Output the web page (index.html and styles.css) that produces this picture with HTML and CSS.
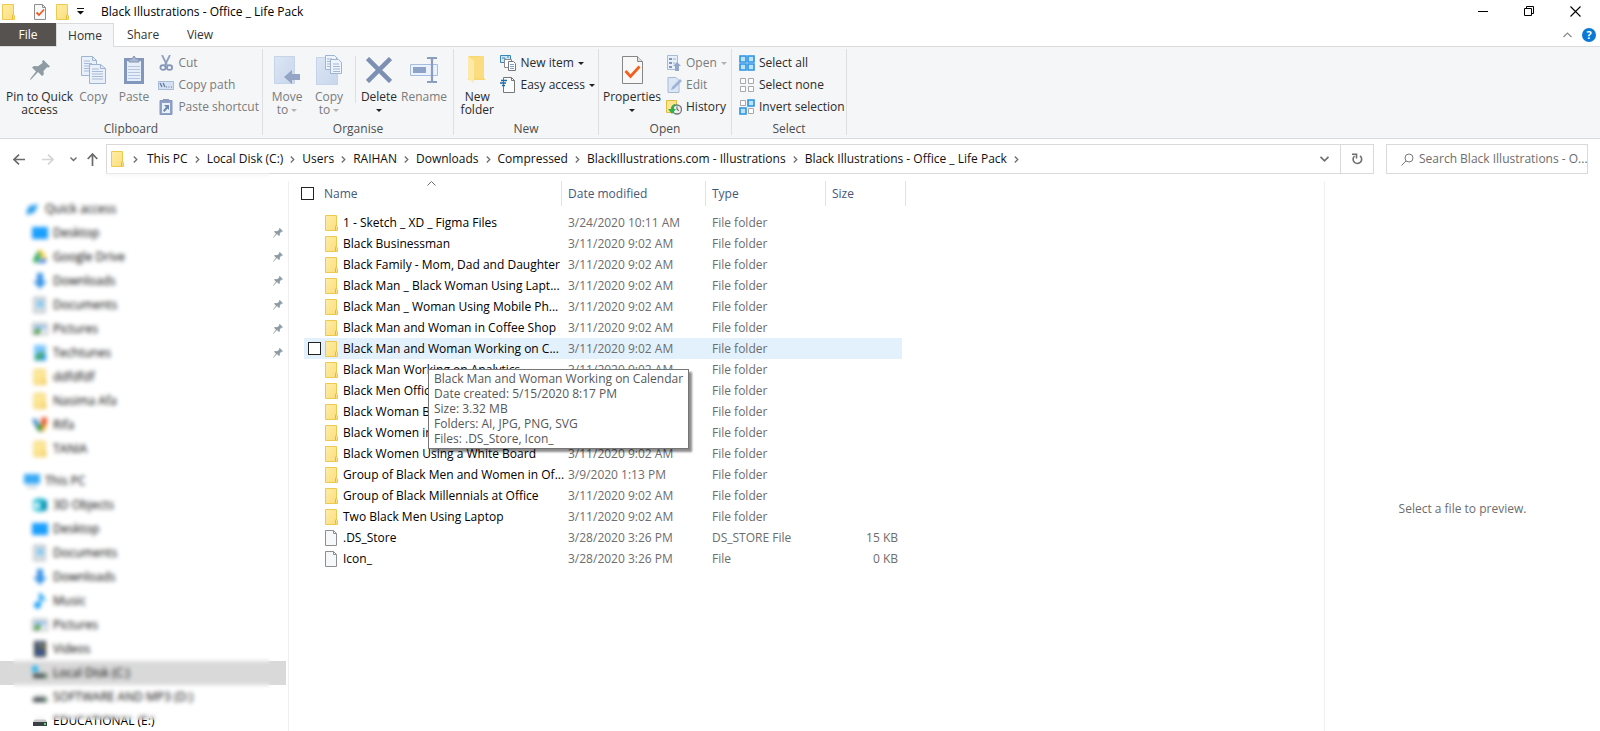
FILE: index.html
```html
<!DOCTYPE html>
<html lang="en">
<head>
<meta charset="utf-8">
<title>Black Illustrations - Office _ Life Pack</title>
<link rel="stylesheet" href="styles.css">
</head>
<body>
<svg class="defs" aria-hidden="true">
  <linearGradient id="fold" x1="0" y1="0" x2="1" y2="1"><stop offset="0" stop-color="#ffeda6"/><stop offset="1" stop-color="#fbdd7c"/></linearGradient>
  <linearGradient id="pale" x1="0" y1="0" x2="1" y2="1"><stop offset="0" stop-color="#dbe5f4"/><stop offset="1" stop-color="#c9d7ec"/></linearGradient>
  <symbol id="folder" viewBox="0 0 13 16"><path d="M.5.5h11v10.500l1 .7v3.800H.5z" fill="url(#fold)" stroke="#ecc94f"/><path d="M10.500 15v-3.500l1-1.500" fill="none" stroke="#e3b93c"/></symbol>
  <symbol id="file" viewBox="0 0 12 16"><path d="M.5.5h8l3 3v12H.5z" fill="#f7f8f9" stroke="#8e8e8e"/><path d="M8.500.5v3h3" fill="none" stroke="#8e8e8e"/></symbol>
  <symbol id="pin" viewBox="0 0 20 20"><path d="M13.500 0 20 6.500l-1.500 1-1.500-.3-3.500 3.800.3 3.500-1.800 1.500-4-4L1 19.500l-1 .5.500-1.500L6 11.500l-4-4L4 6l4 .3L12.500 3l-.3-2z" fill="#8e9ba3"/></symbol>
  <symbol id="crumb" viewBox="0 0 5 7"><path d="M.8.5l3 3-3 3" fill="none" stroke="#6f6f6f" stroke-width="1.300"/></symbol>
  <symbol id="desktop" viewBox="0 0 16 16"><path d="M0 2h16v12H0z" fill="#1593f5"/><path d="M1 3h14v9H1z" fill="#18a0ff"/></symbol>
  <symbol id="down" viewBox="0 0 16 16"><path d="M5 0h6v8h4l-7 8-7-8h4z" fill="#3a93e4"/></symbol>
  <symbol id="doc" viewBox="0 0 16 16"><path d="M2 .5h11v15H2z" fill="#e4e8ea" stroke="#8d979d"/><path d="M5 3h6v8H5z" fill="#82c8f2"/></symbol>
  <symbol id="pic" viewBox="0 0 16 16"><path d="M.5 2.500h15v11H.5z" fill="#e8eef2" stroke="#a7a7a7"/><path d="M2 4h12v4H2z" fill="#9bc3ee"/><path d="M2 12c1-5 4-5 7-4l-2 5H2z" fill="#4f9e46"/></symbol>
  <symbol id="drive" viewBox="0 0 16 16"><path d="M3 6h10l2 3H1z" fill="#c6c8c9"/><path d="M1 9h14v4H1z" fill="#3b4144"/><path d="M12 10h2v2h-2z" fill="#54e06a"/></symbol>
</svg>

<header class="titlebar">
  <div class="quick">
    <svg width="13" height="16"><use href="#folder"/></svg>
    <i class="bar"></i>
    <svg width="12" height="16" viewBox="0 0 12 16"><use href="#file"/><path d="M2.500 8.500 5 11l5-5.500" fill="none" stroke="#ee5a24" stroke-width="1.800"/></svg>
    <svg width="13" height="16"><use href="#folder"/></svg>
    <svg class="qmenu" width="7" height="7" viewBox="0 0 7 7"><path d="M0 0h7v1H0zM0 3h7L3.500 6.500z" fill="#111"/></svg>
    <i class="bar"></i>
  </div>
  <h1>Black Illustrations - Office _ Life Pack</h1>
  <div class="window">
    <button aria-label="Minimise"><svg width="11" height="11"><path d="M0 5.500h10" stroke="#000"/></svg></button>
    <button aria-label="Restore"><svg width="11" height="11"><path d="M.5 2.500h7v7h-7zM2.500 2V.5h7v7H8" fill="none" stroke="#000"/></svg></button>
    <button aria-label="Close"><svg width="11" height="11"><path d="M.5.5l10 10M10.500.5l-10 10" stroke="#000" stroke-width="1.100"/></svg></button>
  </div>
</header>

<nav class="tabs">
  <button class="file">File</button><button class="home">Home</button><button class="share">Share</button><button class="view">View</button>
  <div class="tabs-end">
    <button aria-label="Collapse ribbon"><svg width="9" height="6"><path d="M.5 5l4-4 4 4" fill="none" stroke="#8a8a8a" stroke-width="1.200"/></svg></button>
    <button class="help" aria-label="Help">?</button>
  </div>
</nav>

<section class="ribbon">
  <div class="group clipboard">
    <div class="tools">
      <button class="big wide"><svg width="20" height="20"><use href="#pin"/></svg><span>Pin to Quick<br>access</span></button>
      <button class="big off"><svg width="25" height="28" viewBox="0 0 25 28"><g fill="#e9f0fa" stroke="#9fb3d2"><path d="M.5.5h11l4 4v15H.5z"/><path d="M11.500.5v4h4" fill="none"/><path d="M8.500 8.500h11l5 4v15h-16z"/><path d="M19.500 8.500v4h5" fill="none"/></g><path d="M3 5h6M3 7.500h8M3 10h5M3 12.500h5M3 15h5M11 13h7M11 15.500h11M11 18h11M11 20.500h11M11 23h11" stroke="#a9bbd8"/></svg><span>Copy</span></button>
      <button class="big off"><svg width="20" height="28" viewBox="0 0 20 28"><path d="M1 3h18v24H1z" fill="#8296be" stroke="#8397bd" stroke-width="2"/><path d="M3 5h14v20H3z" fill="#e6eefa"/><path d="M5 6V3h3l2-3 2 3h3v3z" fill="#a9b8d0" stroke="#8595b3"/><path d="M4 10.500h12M4 13.500h12M4 16.500h12M4 19.500h12M4 22.500h12" stroke="#b6c6df"/></svg><span>Paste</span></button>
      <div class="list">
        <button class="off"><svg width="16" height="16"><path d="M4 0l5 10M12 0L7 10" stroke="#8fa1bf" stroke-width="1.800"/><g fill="none" stroke="#8496b8" stroke-width="1.800"><ellipse cx="5" cy="12.500" rx="2.600" ry="2.400"/><ellipse cx="11.500" cy="12.500" rx="2.600" ry="2.400"/></g></svg>Cut</button>
        <button class="off"><svg width="16" height="16"><path d="M.5 4.500h15v8H.5z" fill="#d4e1f3" stroke="#a9bbd6"/><path d="M2 6l2 4M5 6l2 4M8 10h1M10.500 10h1M13 10h1" stroke="#5d7298" stroke-width="1.200"/></svg>Copy path</button>
        <button class="off"><svg width="16" height="16"><path d="M2 1.500h12v14H2z" fill="#8ea2c7" stroke="#8598bd"/><path d="M4 4h8v10H4z" fill="#eaf1fb"/><path d="M5 0h6v3H5z" fill="#8c9cba"/><path d="M6 6h5v5L9.500 9.500 6.500 13 5 11.500 8 8z" fill="#6f86b0"/></svg>Paste shortcut</button>
      </div>
    </div>
    <div class="caption">Clipboard</div>
  </div>

  <div class="group organise">
    <div class="tools">
      <button class="big off"><svg width="26" height="28" viewBox="0 0 26 28"><path d="M.5.5h20v27H.5z" fill="url(#pale)" stroke="#c6d4ea"/><path d="M10 21l8-7v4h8v6h-8v4z" fill="#93a4c4"/></svg><span>Move<br>to <b class="arrow"></b></span></button>
      <button class="big off"><svg width="26" height="30" viewBox="0 0 26 30"><path d="M.5 2.500h21v27H.5z" fill="url(#pale)" stroke="#c6d4ea"/><g fill="#eef4fc" stroke="#9fb3d2"><path d="M9.500.5h9l2 2v12h-11z"/><path d="M14.500 4.500h8l3 3v11h-11z"/></g><path d="M11 4h5M11 6.500h3M11 9h3M11 11.500h3M17 9h6M17 11.500h7M17 14h7M17 16.500h7" stroke="#a2b6d6"/></svg><span>Copy<br>to <b class="arrow"></b></span></button>
      <i class="rule"></i>
      <button class="big"><svg width="26" height="26"><path d="M1.500 1.500l23 23M24.500 1.500l-23 23" stroke="#7d90b3" stroke-width="4.500"/></svg><span>Delete<br><b class="arrow"></b></span></button>
      <button class="big off"><svg width="28" height="26"><path d="M.5 7.500h27v11H.5z" fill="#e9f2fd" stroke="#a5bde0"/><path d="M3 10h13v6H3z" fill="#8ea2c6"/><path d="M17 1h4l1 1 1-1h4M17 25h4l1-1 1 1h4M22 2v22" fill="none" stroke="#8b9dbe" stroke-width="2.200"/></svg><span>Rename</span></button>
    </div>
    <div class="caption">Organise</div>
  </div>

  <div class="group new">
    <div class="tools">
      <button class="big"><svg width="20" height="27" viewBox="0 0 20 27"><path d="M1 0h16v22l2 2H1z" fill="#f8d775"/><path d="M5 2l12-2v22H6z" fill="#fbdc7f"/><path d="M1 0l6 5v22l-6-4z" fill="#ffe9a8"/></svg><span>New<br>folder</span></button>
      <div class="list">
        <button><svg width="16" height="16"><path d="M.5.5h10v7H.5z" fill="#cfe7f8" stroke="#3a87b7"/><path d="M2 3h3v3M7 2h2" stroke="#3a87b7" fill="none"/><path d="M4.500 4.500h7v8h-7z" fill="#fff" stroke="#8c8c8c"/><path d="M8.500 6.500h5l2 2v7h-7z" fill="#fff" stroke="#777"/><path d="M10 9.500h4M10 11.500h4M10 13.500h4" stroke="#7d9fd0"/></svg>New item<b class="arrow"></b></button>
        <button><svg width="16" height="16"><path d="M3.500.5h8l3 3v12h-11z" fill="#fbfcfc" stroke="#777"/><path d="M11.500.5v3h3" fill="none" stroke="#777"/><path d="M1 3.500h6M0 6h6M2 8.500h3" stroke="#1e6aa8" stroke-width="1.300"/></svg>Easy access<b class="arrow"></b></button>
      </div>
    </div>
    <div class="caption">New</div>
  </div>

  <div class="group open">
    <div class="tools">
      <button class="big wide"><svg width="21" height="28" viewBox="0 0 21 28"><path d="M.5.5h15l5 5v22H.5z" fill="#f8f8f8" stroke="#868686"/><path d="M15.500.5v5h5" fill="#ddd" stroke="#868686"/><path d="M3.500 15l5 5.500 9-10" fill="none" stroke="#f4601c" stroke-width="2.800"/></svg><span>Properties<br><b class="arrow"></b></span></button>
      <div class="list">
        <button class="off"><svg width="16" height="16"><path d="M1.500.5h10v14h-10z" fill="#e7effa" stroke="#a9bad6"/><path d="M3 3h3v2H3zM3 7h3v2H3zM3 11h3v2H3z" fill="#7f95bd"/><path d="M7 4h3M7 8h2" stroke="#9fb0cf"/><path d="M11 7l4 4h-2v5H9v-5H7z" fill="#94a6c8"/></svg>Open<b class="arrow"></b></button>
        <button class="off"><svg width="16" height="16"><path d="M2 .5h8l3 3v12H2z" fill="#dce7f6" stroke="#a9bad6"/><path d="M5 13l1-3 8-8 2 2-8 8z" fill="#9fb4d6"/></svg>Edit</button>
        <button><svg width="16" height="16"><path d="M.5 1.500h10v12H.5z" fill="#fde68f" stroke="#e2bb3f"/><circle cx="11" cy="10.500" r="4.500" fill="#eee" stroke="#777" stroke-width="1.300"/><path d="M11 7.500v3l2 1" fill="none" stroke="#555"/><path d="M2 10h3c0-3 2-5 5-5-2 1-2 3-2 5h2l-4 5z" fill="#2fae4b"/></svg>History</button>
      </div>
    </div>
    <div class="caption">Open</div>
  </div>

  <div class="group select">
    <div class="tools">
      <div class="list">
        <button><svg width="16" height="16"><path d="M1 1h6v6H1zM9 1h6v6H9zM1 9h6v6H1zM9 9h6v6H9z" fill="#bfe2fb" stroke="#2b93e3" stroke-width="1.600"/></svg>Select all</button>
        <button><svg width="16" height="16"><path d="M1.500 1.500h5v5h-5zM9.500 1.500h5v5h-5zM1.500 9.500h5v5h-5zM9.500 9.500h5v5h-5z" fill="#fff" stroke="#a8a8a8"/></svg>Select none</button>
        <button><svg width="16" height="16"><path d="M1.500 1.500h5v5h-5zM9.500 9.500h5v5h-5z" fill="#fff" stroke="#a8a8a8"/><path d="M9 1h6v6H9zM1 9h6v6H1z" fill="#bfe2fb" stroke="#2b93e3" stroke-width="1.600"/></svg>Invert selection</button>
      </div>
    </div>
    <div class="caption">Select</div>
  </div>
</section>

<div class="nav">
  <div class="arrows">
    <button aria-label="Back"><svg width="12" height="11"><path d="M12 5.500H1M6 .7L1 5.500l5 4.800" fill="none" stroke="#6a6a6a" stroke-width="1.600"/></svg></button>
    <button aria-label="Forward"><svg width="12" height="11"><path d="M0 5.500h11M6 .7l5 4.800-5 4.800" fill="none" stroke="#d4d4d4" stroke-width="1.600"/></svg></button>
    <button class="recent" aria-label="Recent"><svg width="7" height="5"><path d="M.5.5l3 3 3-3" fill="none" stroke="#6a6a6a" stroke-width="1.400"/></svg></button>
    <button aria-label="Up"><svg width="11" height="13"><path d="M5.500 13V1M.7 6l4.800-5 4.800 5" fill="none" stroke="#6a6a6a" stroke-width="1.700"/></svg></button>
  </div>
  <div class="address">
    <svg class="loc" width="13" height="16"><use href="#folder"/></svg>
    <svg class="sep" width="5" height="7"><use href="#crumb"/></svg>
    <a href="#">This PC</a><svg class="sep" width="5" height="7"><use href="#crumb"/></svg>
    <a href="#">Local Disk (C:)</a><svg class="sep" width="5" height="7"><use href="#crumb"/></svg>
    <a href="#">Users</a><svg class="sep" width="5" height="7"><use href="#crumb"/></svg>
    <a href="#">RAIHAN</a><svg class="sep" width="5" height="7"><use href="#crumb"/></svg>
    <a href="#">Downloads</a><svg class="sep" width="5" height="7"><use href="#crumb"/></svg>
    <a href="#">Compressed</a><svg class="sep" width="5" height="7"><use href="#crumb"/></svg>
    <a href="#">BlackIllustrations.com - Illustrations</a><svg class="sep" width="5" height="7"><use href="#crumb"/></svg>
    <a href="#">Black Illustrations - Office _ Life Pack</a><svg class="sep" width="5" height="7"><use href="#crumb"/></svg>
    <button class="drop" aria-label="Previous locations"><svg width="9" height="6"><path d="M.5.8l4 4 4-4" fill="none" stroke="#6f6f6f" stroke-width="1.700"/></svg></button>
    <button class="refresh" aria-label="Refresh"><svg width="11" height="12"><path d="M2.500 3A4.300 4.300 0 1 0 8 2.800M0 1.200h4.500V5.500" fill="none" stroke="#6f6f6f" stroke-width="1.600"/></svg></button>
  </div>
  <label class="search"><svg width="13" height="13"><circle cx="8" cy="5" r="4" fill="none" stroke="#7a7a7a"/><path d="M5 8L.5 12.500" stroke="#7a7a7a"/></svg><input type="text" placeholder="Search Black Illustrations - O..." aria-label="Search"></label>
</div>

<main class="body">
  <aside class="tree">
    <ul>
      <li class="root"><svg width="16" height="16"><path d="M2 12L5 5l9-2-3 8-7 3z" fill="#2f9fea"/></svg>Quick access</li>
      <li><svg width="16" height="16"><use href="#desktop"/></svg>Desktop<svg class="pin" width="10" height="10"><use href="#pin"/></svg></li>
      <li><svg width="16" height="16"><path d="M1 11L6 2l3 4-4 8H3z" fill="#27a552"/><path d="M6 1h4l5 9h-4z" fill="#fbc934"/><path d="M6 14l2-4h7l-2 4z" fill="#3d7fe8"/></svg>Google Drive<svg class="pin" width="10" height="10"><use href="#pin"/></svg></li>
      <li><svg width="16" height="16"><use href="#down"/></svg>Downloads<svg class="pin" width="10" height="10"><use href="#pin"/></svg></li>
      <li><svg width="16" height="16"><use href="#doc"/></svg>Documents<svg class="pin" width="10" height="10"><use href="#pin"/></svg></li>
      <li><svg width="16" height="16"><use href="#pic"/></svg>Pictures<svg class="pin" width="10" height="10"><use href="#pin"/></svg></li>
      <li><svg width="16" height="16"><path d="M2 0h12v16H2z" fill="#7cc6fa"/><path d="M3 15c0-6 4-8 10-8l-5 8z" fill="#3fa563"/><path d="M8 15l6-7v7z" fill="#2292e8"/></svg>Techtunes<svg class="pin" width="10" height="10"><use href="#pin"/></svg></li>
      <li><svg width="16" height="16"><use href="#folder"/></svg>ddfdfdf</li>
      <li><svg width="16" height="16"><use href="#folder"/></svg>Nasima Afa</li>
      <li><svg width="16" height="16"><path d="M0 2h5l4 12-5-3z" fill="#3c86c9"/><path d="M9 1l6-1v7l-6 5z" fill="#ea5b30"/><path d="M4 9l4-2 5 3-3 5-4-1z" fill="#3f9a4b"/><path d="M10 9l5-2-2 6-4 2z" fill="#f2a92c"/></svg>Rifa</li>
      <li><svg width="16" height="16"><use href="#folder"/></svg>TANIA</li>
    </ul>
    <ul>
      <li class="root pc"><svg width="16" height="16"><path d="M0 1h16v10H0z" fill="#3aaaf4"/><path d="M3 13h10v2H3z" fill="#b7c7d2"/></svg>This PC</li>
      <li><svg width="16" height="16"><path d="M1 3l7-2 7 2v10l-7 2-7-2z" fill="#1fb6cf"/><path d="M2 5l6 1v5l-6 1z" fill="#d4f6fa"/><path d="M11 4l4 1v8l-4 1z" fill="#0783a6"/></svg>3D Objects</li>
      <li><svg width="16" height="16"><use href="#desktop"/></svg>Desktop</li>
      <li><svg width="16" height="16"><use href="#doc"/></svg>Documents</li>
      <li><svg width="16" height="16"><use href="#down"/></svg>Downloads</li>
      <li><svg width="16" height="16"><path d="M7 0h2c1 3 5 4 4 9h-1c0-2-1-3-3-3v6a3.500 3.500 0 1 1-2-3z" fill="#18a0f5"/></svg>Music</li>
      <li><svg width="16" height="16"><use href="#pic"/></svg>Pictures</li>
      <li><svg width="16" height="16"><path d="M2 0h12v16H2z" fill="#3f4247"/><path d="M5 1h6v6H5z" fill="#55719e"/><path d="M5 9h6v5H5z" fill="#3662b5"/><path d="M9 3h3v5H9z" fill="#8d813e"/></svg>Videos</li>
      <li class="on"><svg width="16" height="16"><use href="#drive"/><path d="M0 1h6v6H0z" fill="#28b6ee"/></svg>Local Disk (C:)</li>
      <li><svg width="16" height="16"><use href="#drive"/></svg>SOFTWARE AND MP3 (D:)</li>
      <li><svg width="16" height="16"><use href="#drive"/></svg>EDUCATIONAL (E:)</li>
    </ul>
    <div class="frost"></div>
  </aside>

  <section class="files">
    <table>
      <colgroup><col class="c-check"><col class="c-name"><col class="c-date"><col class="c-type"><col class="c-size"></colgroup>
      <thead><tr>
        <th colspan="2"><div class="head first"><input type="checkbox" aria-label="Select all items">Name<svg class="sort" width="9" height="5"><path d="M.5 4.500l4-4 4 4" fill="none" stroke="#6b6b6b"/></svg></div></th>
        <th><div class="head">Date modified</div></th><th><div class="head">Type</div></th><th><div class="head">Size</div></th>
      </tr></thead>
      <tbody>
        <tr><td></td><td><svg width="13" height="16"><use href="#folder"/></svg>1 - Sketch _ XD _ Figma Files</td><td>3/24/2020 10:11 AM</td><td>File folder</td><td></td></tr>
        <tr><td></td><td><svg width="13" height="16"><use href="#folder"/></svg>Black Businessman</td><td>3/11/2020 9:02 AM</td><td>File folder</td><td></td></tr>
        <tr><td></td><td><svg width="13" height="16"><use href="#folder"/></svg>Black Family - Mom, Dad and Daughter</td><td>3/11/2020 9:02 AM</td><td>File folder</td><td></td></tr>
        <tr><td></td><td><svg width="13" height="16"><use href="#folder"/></svg>Black Man _ Black Woman Using Lapt...</td><td>3/11/2020 9:02 AM</td><td>File folder</td><td></td></tr>
        <tr><td></td><td><svg width="13" height="16"><use href="#folder"/></svg>Black Man _ Woman Using Mobile Ph...</td><td>3/11/2020 9:02 AM</td><td>File folder</td><td></td></tr>
        <tr><td></td><td><svg width="13" height="16"><use href="#folder"/></svg>Black Man and Woman in Coffee Shop</td><td>3/11/2020 9:02 AM</td><td>File folder</td><td></td></tr>
        <tr class="hover"><td><input type="checkbox" aria-label="Select Black Man and Woman Working on Calendar"></td><td><svg width="13" height="16"><use href="#folder"/></svg>Black Man and Woman Working on C...</td><td>3/11/2020 9:02 AM</td><td>File folder</td><td></td></tr>
        <tr><td></td><td><svg width="13" height="16"><use href="#folder"/></svg>Black Man Working on Analytics</td><td>3/11/2020 9:02 AM</td><td>File folder</td><td></td></tr>
        <tr><td></td><td><svg width="13" height="16"><use href="#folder"/></svg>Black Men Office</td><td>3/11/2020 9:02 AM</td><td>File folder</td><td></td></tr>
        <tr><td></td><td><svg width="13" height="16"><use href="#folder"/></svg>Black Woman Business</td><td>3/11/2020 9:02 AM</td><td>File folder</td><td></td></tr>
        <tr><td></td><td><svg width="13" height="16"><use href="#folder"/></svg>Black Women in Office</td><td>3/11/2020 9:02 AM</td><td>File folder</td><td></td></tr>
        <tr><td></td><td><svg width="13" height="16"><use href="#folder"/></svg>Black Women Using a White Board</td><td>3/11/2020 9:02 AM</td><td>File folder</td><td></td></tr>
        <tr><td></td><td><svg width="13" height="16"><use href="#folder"/></svg>Group of Black Men and Women in Of...</td><td>3/9/2020 1:13 PM</td><td>File folder</td><td></td></tr>
        <tr><td></td><td><svg width="13" height="16"><use href="#folder"/></svg>Group of Black Millennials at Office</td><td>3/11/2020 9:02 AM</td><td>File folder</td><td></td></tr>
        <tr><td></td><td><svg width="13" height="16"><use href="#folder"/></svg>Two Black Men Using Laptop</td><td>3/11/2020 9:02 AM</td><td>File folder</td><td></td></tr>
        <tr><td></td><td><svg width="13" height="16" viewBox="0 0 13 16"><use href="#file" width="12" height="16"/></svg>.DS_Store</td><td>3/28/2020 3:26 PM</td><td>DS_STORE File</td><td>15 KB</td></tr>
        <tr><td></td><td><svg width="13" height="16" viewBox="0 0 13 16"><use href="#file" width="12" height="16"/></svg>Icon_</td><td>3/28/2020 3:26 PM</td><td>File</td><td>0 KB</td></tr>
      </tbody>
    </table>
    <div class="tooltip" role="tooltip">Black Man and Woman Working on Calendar<br>Date created: 5/15/2020 8:17 PM<br>Size: 3.32 MB<br>Folders: AI, JPG, PNG, SVG<br>Files: .DS_Store, Icon_</div>
  </section>

  <aside class="preview">Select a file to preview.</aside>
</main>
</body>
</html>
```
FILE: styles.css
```css
* { box-sizing: border-box; }
html, body { height: 100%; }
body {
  margin: 0;
  display: flex;
  flex-direction: column;
  overflow: hidden;
  background: #fff;
  color: #000;
  font: 12px/16px "Open Sans", "Noto Sans", sans-serif;
}
svg { display: block; flex: none; }
.defs { position: absolute; width: 0; height: 0; }
button { margin: 0; padding: 0; border: 0; background: none; font: inherit; color: inherit; }
a { color: inherit; text-decoration: none; }
input { margin: 0; }

.titlebar { display: flex; align-items: center; height: 23px; flex: none; }
.titlebar h1 { margin: 0; font-size: 12px; font-weight: 400; }
.quick { display: flex; align-items: center; padding-left: 2px; width: 101px; }
.bar { width: 1px; height: 12px; background: #8c8c8c; margin: 0 11px 0 8px; }
.quick svg + svg { margin-left: 10px; }
.quick .qmenu { margin-left: 8px; }
.window { display: flex; margin-left: auto; padding-right: 2px; }
.window button { width: 46px; height: 21px; display: grid; place-items: center; }

.tabs { display: flex; height: 24px; flex: none; border-bottom: 1px solid #d9dbdd; color: #333; }
.tabs button { height: 23px; }
.tabs .file { width: 56px; background: #565250; color: #fff; }
.tabs .home { width: 58px; height: 24px; background: #f4f6f8; border: solid #dadbdc; border-width: 1px 1px 0; }
.tabs .share { width: 58px; }
.tabs .view { width: 56px; }
.tabs-end { display: flex; align-items: center; gap: 10px; margin-left: auto; padding-right: 4px; }
.tabs-end button { display: grid; place-items: center; height: 14px; }
.tabs-end .help { width: 14px; border-radius: 50%; background: #0a78d4; color: #fff; font-size: 11px; line-height: 14px; font-weight: 700; }

.ribbon { display: flex; flex: none; height: 92px; background: #f4f6f8; border-bottom: 1px solid #d9dbdd; color: #2b2b2b; }
.group { display: flex; flex-direction: column; margin: 2px 0 3px; border-right: 1px solid #dddfe1; }
.tools { display: flex; flex: 1; padding: 0 3px; }
.caption { height: 14px; line-height: 16px; text-align: center; color: #4d4d4d; }
.clipboard { width: 263px; }
.organise { width: 191px; }
.new { width: 145px; }
.open { width: 133px; }
.select { width: 115px; }
.big { width: 42px; display: flex; flex-direction: column; align-items: center; line-height: 13px; white-space: nowrap; }
.big svg { margin: auto 0; }
.big span { height: 31px; }
.big.wide { width: 60px; }
.clipboard .big.wide { width: 70px; padding-left: 3px; }
.organise .big:last-child { width: 48px; }
.new .tools { padding-left: 6px; }
.off { color: #7b7b7b; }
.arrow { display: inline-block; vertical-align: middle; border: 3px solid transparent; border-top-color: #222; border-bottom: 0; }
.off .arrow { border-top-color: #b3b3b3; }
.rule { width: 1px; margin: 7px 2px 18px 5px; background: #dddfe1; }
.list { display: flex; flex-direction: column; padding: 3px 0 0 4px; }
.list button { display: flex; align-items: center; gap: 4px; height: 22px; white-space: nowrap; }
.new .list { padding-left: 6px; }

.nav { display: flex; flex: none; padding: 5px 12px 7px 0; height: 42px; }
.arrows { display: flex; align-items: center; gap: 17px; width: 106px; padding-left: 13px; }
.arrows .recent { margin: 0 -7px 0 -1px; }
.address { display: flex; align-items: center; flex: 1; border: 1px solid #d9d9d9; padding-left: 4px; white-space: nowrap; color: #111; }
.sep { margin: 0 7px; }
.loc + .sep { margin: 0 9px; }
.address .drop { margin-left: auto; width: 32px; height: 28px; display: grid; place-items: center; }
.address .refresh { width: 33px; height: 28px; display: grid; place-items: center; border-left: 1px solid #d9d9d9; }
.search { display: flex; align-items: center; gap: 5px; width: 202px; margin-left: 12px; border: 1px solid #d9d9d9; padding-left: 14px; }
.search input { flex: 1; min-width: 0; border: 0; outline: 0; padding: 0; background: none; font: inherit; }
.search input::placeholder { color: #6d6d6d; opacity: 1; }

.body { display: flex; flex: 1; min-height: 0; }
.tree { position: relative; width: 289px; border-right: 1px solid #f0f0f0; padding-top: 16px; }
.tree ul { list-style: none; margin: 0 2px 8px 0; padding: 0; }
.tree li { display: flex; align-items: center; gap: 5px; height: 24px; padding: 0 3px 0 32px; white-space: nowrap; }
.tree .root { padding-left: 24px; }
.tree .on { background: #d9d9d9; }
.tree .pin { margin-left: auto; }
.frost { position: absolute; left: 13px; right: 18px; top: -8px; bottom: 11px; backdrop-filter: blur(2px); }

.files { position: relative; flex: 1; min-width: 0; padding-left: 11px; }
table { width: 606px; table-layout: fixed; border-spacing: 0; }
.c-check { width: 25px; }
.c-name { width: 237px; }
.c-date { width: 144px; }
.c-type { width: 120px; }
.c-size { width: 80px; }
th { height: 31px; padding: 0; vertical-align: top; text-align: left; font-weight: 400; color: #44587c; }
.head { position: relative; display: flex; align-items: center; height: 25px; padding-left: 6px; border-right: 1px solid #e2e2e2; }
.head.first { padding-left: 1px; gap: 10px; }
.sort { position: absolute; left: 50%; top: 0; margin-left: -4px; }
input[type="checkbox"] { appearance: none; width: 13px; height: 13px; border: 1px solid #222; background: #fff; display: block; flex: none; }
td { height: 21px; padding: 0 0 0 6px; white-space: nowrap; color: #6d6d6d; line-height: 20px; background-clip: padding-box; }
td:first-child { padding-left: 4px; border-left: 4px solid transparent; }
td:nth-child(2) { padding-left: 0; color: #000; }
td:nth-child(2) svg { float: left; margin: 2px 5px 0 0; }
td:last-child { border-right: 4px solid transparent; padding-right: 4px; text-align: right; }
.hover td { background-color: #e3f1fd; }

.tooltip { position: absolute; left: 139px; top: 188px; padding: 1px 5px 2px; border: 1px solid #767676; background: #fff; color: #575757; line-height: 15px; white-space: nowrap; box-shadow: 3px 3px 2px rgba(0, 0, 0, .45); }

.preview { width: 276px; border-left: 1px solid #f0f0f0; display: grid; place-items: center; color: #6d6d6d; padding-top: 106px; }
```
